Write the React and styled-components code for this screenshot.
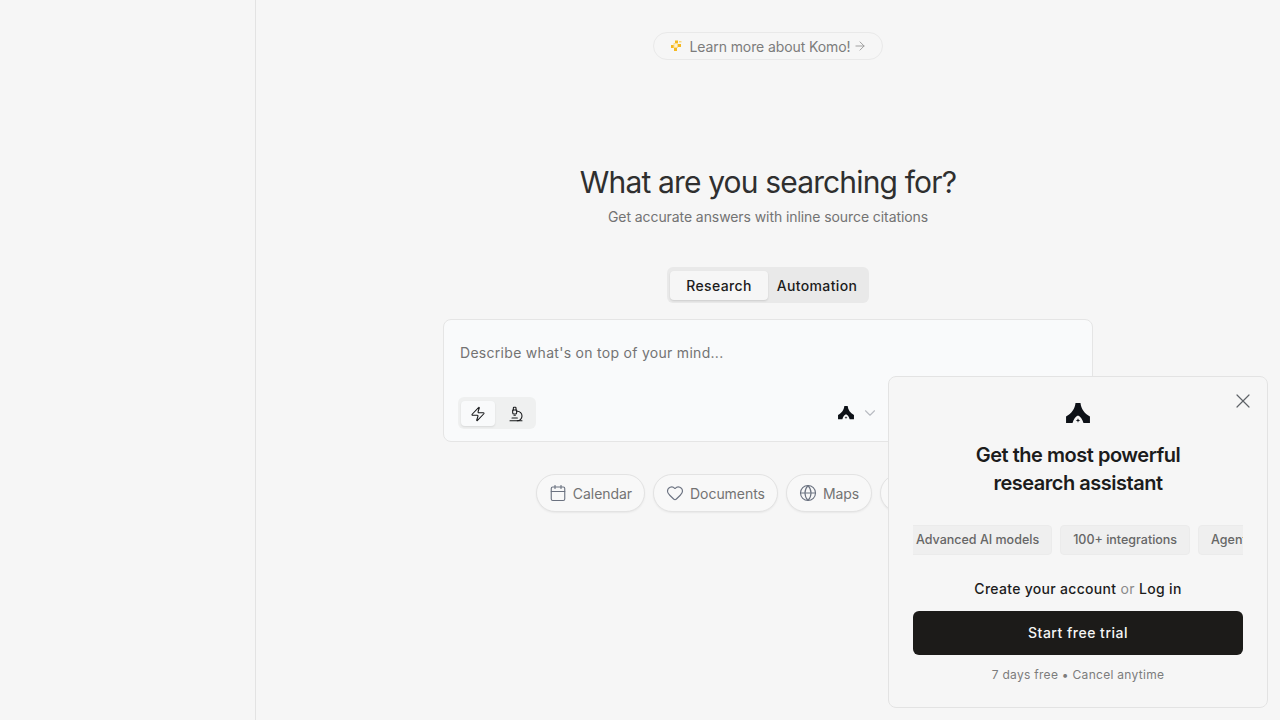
import React from "react";
import styled, { createGlobalStyle } from "styled-components";
import { Zap, Microscope, ChevronDown, Calendar, Heart, Globe, X, ArrowRight } from "lucide-react";

const GlobalStyle = createGlobalStyle`
  html, body {
    margin: 0;
    height: 100%;
    background: #f6f6f6;
    font-family: "Inter", "Liberation Sans", sans-serif;
    overflow: hidden;
  }
  * { box-sizing: border-box; }
`;

const KomoLogo = ({ size = 16 }) => (
  <svg width={size} height={size * 0.83} viewBox="0 0 24 20" fill="#0d1117">
    <path d="M9.5 0 H14.5 C15 5.5 18.5 11 24 13.5 V20 H17.5 C16.5 16.5 14.5 13.5 12 12.5 C9.5 13.5 7.5 16.5 6.5 20 H0 V13.5 C5.5 11 9 5.5 9.5 0 Z" />
    <path d="M12 15.2 L12.6 16.9 L14.3 17.5 L12.6 18.1 L12 19.8 L11.4 18.1 L9.7 17.5 L11.4 16.9 Z" />
  </svg>
);

const SparkIcon = () => (
  <svg width="12" height="12" viewBox="0 0 12 12" fill="#f5b921">
    <rect x="5" y="0.5" width="3" height="2.5" />
    <rect x="9" y="1" width="2.5" height="1.5" fill="#f9d77e" />
    <rect x="8" y="4" width="3" height="3" />
    <rect x="1" y="5" width="3" height="3" />
    <rect x="4" y="8" width="3" height="3" />
    <rect x="3.5" y="3" width="4.5" height="5" fill="#fbdc8c" />
    <rect x="4.5" y="4" width="2.5" height="3" fill="#fdf2d2" />
  </svg>
);

export default function App() {
  return (
    <>
      <GlobalStyle />
      <Page>
        <Sidebar />
        <Main>
          <LearnPill>
            <SparkIcon />
            <span>Learn more about Komo!</span>
            <ArrowRight size={14} strokeWidth={1.6} color="#9a9a9a" />
          </LearnPill>
          <Title>What are you searching for?</Title>
          <Subtitle>Get accurate answers with inline source citations</Subtitle>
          <Tabs>
            <Tab $active>Research</Tab>
            <Tab>Automation</Tab>
          </Tabs>
          <SearchCard>
            <Placeholder>Describe what's on top of your mind...</Placeholder>
            <CardFooter>
              <ModeToggle>
                <ModeButton $active $width={34}><Zap size={16} strokeWidth={1.6} /></ModeButton>
                <ModeButton $width={35}><Microscope size={16} strokeWidth={1.6} /></ModeButton>
              </ModeToggle>
              <ModelPicker>
                <KomoLogo />
                <ChevronDown size={18} strokeWidth={1.5} color="#b9bcc2" />
              </ModelPicker>
            </CardFooter>
          </SearchCard>
          <Chips>
            <Chip><Calendar size={18} strokeWidth={1.5} color="#6b7280" />Calendar</Chip>
            <Chip><Heart size={18} strokeWidth={1.5} color="#6b7280" />Documents</Chip>
            <Chip><Globe size={18} strokeWidth={1.5} color="#6b7280" />Maps</Chip>
            <Chip $minWidth={120} aria-hidden="true" />
          </Chips>
        </Main>
      </Page>
      <Popup>
        <CloseButton><X size={24} strokeWidth={1.2} /></CloseButton>
        <KomoLogo size={24} />
        <PopupTitle>Get the most powerful<br />research assistant</PopupTitle>
        <TagsViewport>
          <Tag>Advanced AI models</Tag>
          <Tag>100+ integrations</Tag>
          <Tag>Agents</Tag>
        </TagsViewport>
        <AuthLine>
          <b>Create your account</b> or <b>Log in</b>
        </AuthLine>
        <TrialButton>Start free trial</TrialButton>
        <FinePrint>7 days free • Cancel anytime</FinePrint>
      </Popup>
    </>
  );
}

const Page = styled.div`
  display: flex;
  height: 100vh;
`;

const Sidebar = styled.aside`
  width: 256px;
  flex-shrink: 0;
  border-right: 1px solid #e3e3e3;
  background: #f6f6f6;
`;

const Main = styled.main`
  flex: 1;
  display: flex;
  flex-direction: column;
  align-items: center;
  padding-top: 32px;
`;

const LearnPill = styled.div`
  display: flex;
  align-items: center;
  gap: 8px;
  height: 28px;
  padding: 0 15px 0 16px;
  border: 1px solid #e9e9e9;
  border-radius: 14px;
  font-size: 14px;
  letter-spacing: -0.1px;
  color: #7c7c7c;
  span { margin-right: -5px; }
`;

const Title = styled.h1`
  margin: 103px 0 0;
  font-size: 30px;
  line-height: 38px;
  font-weight: 400;
  letter-spacing: -0.85px;
  color: #2f2f2f;
`;

const Subtitle = styled.p`
  margin: 6px 0 0;
  font-size: 14px;
  line-height: 20px;
  letter-spacing: -0.08px;
  color: #737373;
`;

const Tabs = styled.div`
  display: flex;
  align-items: center;
  margin-top: 40px;
  height: 36px;
  padding: 3px;
  background: #e9e9e9;
  border-radius: 6px;
`;

const Tab = styled.div`
  display: flex;
  align-items: center;
  justify-content: center;
  height: 29px;
  width: 98px;
  font-size: 14px;
  font-weight: 500;
  letter-spacing: 0.35px;
  color: #1c1c1c;
  border-radius: 4px;
  background: ${(p) => (p.$active ? "#f6f6f6" : "transparent")};
  box-shadow: ${(p) => (p.$active ? "0 1px 2px rgba(0,0,0,0.12)" : "none")};
`;

const SearchCard = styled.div`
  display: flex;
  flex-direction: column;
  justify-content: space-between;
  width: 650px;
  height: 123px;
  margin-top: 16px;
  padding: 23px 16px 12px 14px;
  background: #f9fafb;
  border: 1px solid #e5e5e5;
  border-radius: 8px;
`;

const Placeholder = styled.div`
  padding-left: 2px;
  font-size: 14px;
  line-height: 20px;
  letter-spacing: 0.29px;
  color: #737373;
`;

const CardFooter = styled.div`
  display: flex;
  align-items: center;
  justify-content: space-between;
`;

const ModeToggle = styled.div`
  display: flex;
  gap: 3px;
  padding: 4px 3px 3px;
  background: #eff0f0;
  border-radius: 6px;
`;

const ModeButton = styled.div`
  display: flex;
  align-items: center;
  justify-content: center;
  width: ${(p) => p.$width}px;
  height: 25px;
  color: #17181a;
  border-radius: 4px;
  background: ${(p) => (p.$active ? "#f9fafb" : "transparent")};
  box-shadow: ${(p) => (p.$active ? "0 1px 2px rgba(0,0,0,0.1)" : "none")};
`;

const ModelPicker = styled.div`
  display: flex;
  align-items: center;
  gap: 7px;
  margin-right: 197px;
`;

const Chips = styled.div`
  display: flex;
  gap: 8px;
  margin-top: 32px;
`;

const Chip = styled.div`
  display: flex;
  align-items: center;
  gap: 6px;
  height: 38px;
  min-width: ${(p) => (p.$minWidth ? `${p.$minWidth}px` : "0")};
  padding: 0 12px;
  border: 1px solid #e3e3e3;
  border-radius: 19px;
  background: #f8f8f8;
  box-shadow: 0 1px 2px rgba(0, 0, 0, 0.06);
  font-size: 14px;
  letter-spacing: -0.05px;
  color: #737373;
`;

const Popup = styled.div`
  position: fixed;
  right: 12px;
  bottom: 12px;
  width: 380px;
  height: 332px;
  display: flex;
  flex-direction: column;
  align-items: center;
  padding: 26px 24px 0;
  background: #f6f6f6;
  border: 1px solid #e3e3e3;
  border-radius: 8px;
`;

const CloseButton = styled.div`
  position: absolute;
  top: 12px;
  right: 12px;
  display: flex;
  color: #5f6368;
`;

const PopupTitle = styled.h2`
  margin: 18px 0 0;
  font-size: 20px;
  line-height: 28px;
  font-weight: 600;
  letter-spacing: -0.48px;
  text-align: center;
  color: #1c1c1c;
`;

const TagsViewport = styled.div`
  display: flex;
  gap: 8px;
  width: 330px;
  margin-top: 28px;
  overflow: hidden;
  flex-shrink: 0;
`;

const Tag = styled.div`
  flex-shrink: 0;
  height: 30px;
  line-height: 28px;
  padding: 0 12px;
  border: 1px solid #ebebeb;
  border-radius: 4px;
  background: #efefef;
  font-size: 12.5px;
  font-weight: 500;
  color: #666;
  &:first-child {
    margin-left: -10px;
  }
`;

const AuthLine = styled.div`
  margin-top: 24px;
  font-size: 14px;
  line-height: 20px;
  letter-spacing: 0.3px;
  color: #8a8a8a;
  b {
    font-weight: 500;
    color: #1c1c1c;
  }
`;

const TrialButton = styled.div`
  display: flex;
  align-items: center;
  justify-content: center;
  width: 330px;
  height: 44px;
  flex-shrink: 0;
  margin-top: 12px;
  background: #1c1b19;
  border-radius: 6px;
  font-size: 14px;
  font-weight: 500;
  letter-spacing: 0.5px;
  color: #f5f5f5;
`;

const FinePrint = styled.div`
  margin-top: 12px;
  font-size: 12px;
  line-height: 16px;
  letter-spacing: 0.29px;
  color: #7c7c7c;
`;
